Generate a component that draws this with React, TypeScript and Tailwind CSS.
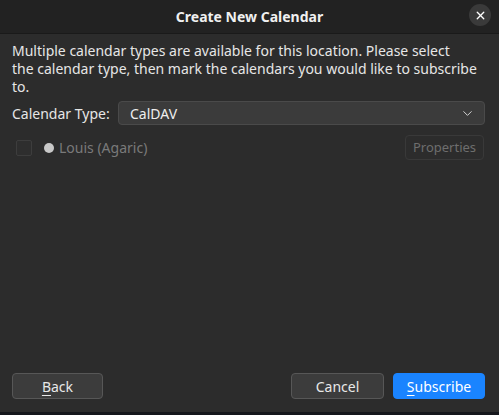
import { ChevronDown, X } from "lucide-react";

function Button({
  children,
  primary,
  className = "",
}: {
  children: React.ReactNode;
  primary?: boolean;
  className?: string;
}) {
  return (
    <button
      className={
        "flex h-[26px] items-center justify-center rounded-[4px] border text-[14px] " +
        (primary
          ? "border-[#1a84ff] bg-[#1a84ff] text-white"
          : "border-[#575757] bg-[#3c3c3c] text-[#e8e8e8]") +
        " " +
        className
      }
    >
      {children}
    </button>
  );
}

export default function App() {
  return (
    <div
      className="flex h-[415px] w-[499px] flex-col bg-[#15171c] text-[#e6e6e6]"
      style={{ fontFamily: '"Noto Sans", "Open Sans", sans-serif' }}
    >
      <div className="flex h-[412px] flex-col bg-[#2c2c2c]">
        {/* Header bar */}
        <div className="relative flex h-[34px] shrink-0 items-center justify-center border-b border-[#1a1a1a] bg-[#222222]">
          <span className="text-[14px] font-bold text-[#f0f0f0]">Create New Calendar</span>
          <span className="absolute right-[8px] top-[4px] flex h-[22px] w-[22px] items-center justify-center rounded-full bg-[#3a3a3a]">
            <X size={13} strokeWidth={2.5} className="text-white" />
          </span>
        </div>

        <div className="flex flex-1 flex-col pl-[12px] pr-[14px] pt-[8px]">
          <p className="text-[14px] leading-[18px] text-[#e6e6e6]">
            Multiple calendar types are available for this location. Please select
            <br />
            the calendar type, then mark the calendars you would like to subscribe
            <br />
            to.
          </p>

          <div className="mt-[5px] flex items-center gap-[8px]">
            <span className="text-[14px]">Calendar Type:</span>
            <div className="ml-auto flex h-[24px] w-[367px] items-center justify-between rounded-[4px] border border-[#4a4a4a] bg-[#3b3b3b] pl-[11px] pr-[9px]">
              <span className="text-[14px] text-[#eeeeee]">CalDAV</span>
              <ChevronDown size={15} strokeWidth={1.5} className="text-[#dddddd]" />
            </div>
          </div>

          <div className="mt-[10px] flex items-center">
            <span className="ml-[4px] h-[16px] w-[16px] rounded-[2px] border border-[#3d3d3d] bg-[#2e2e2e]" />
            <span className="ml-[12px] h-[10px] w-[10px] rounded-full bg-[#c8c8c8]" />
            <span className="ml-[5px] text-[14px] text-[#7a7a7a]">Louis (Agaric)</span>
            <span className="ml-auto mr-[1px] flex h-[25px] w-[79px] items-center justify-center rounded-[4px] border border-[#393939] bg-[#2c2c2c] text-[13px] text-[#6e6e6e]">
              Properties
            </span>
          </div>

          <div className="mt-auto mb-[13px] flex items-center">
            <Button className="w-[91px]">
              <span className="underline decoration-1 underline-offset-[3px]">B</span>ack
            </Button>
            <Button className="ml-auto w-[93px]">Cancel</Button>
            <Button primary className="ml-[9px] w-[92px]">
              <span className="underline decoration-1 underline-offset-[3px]">S</span>ubscribe
            </Button>
          </div>
        </div>
      </div>
    </div>
  );
}
